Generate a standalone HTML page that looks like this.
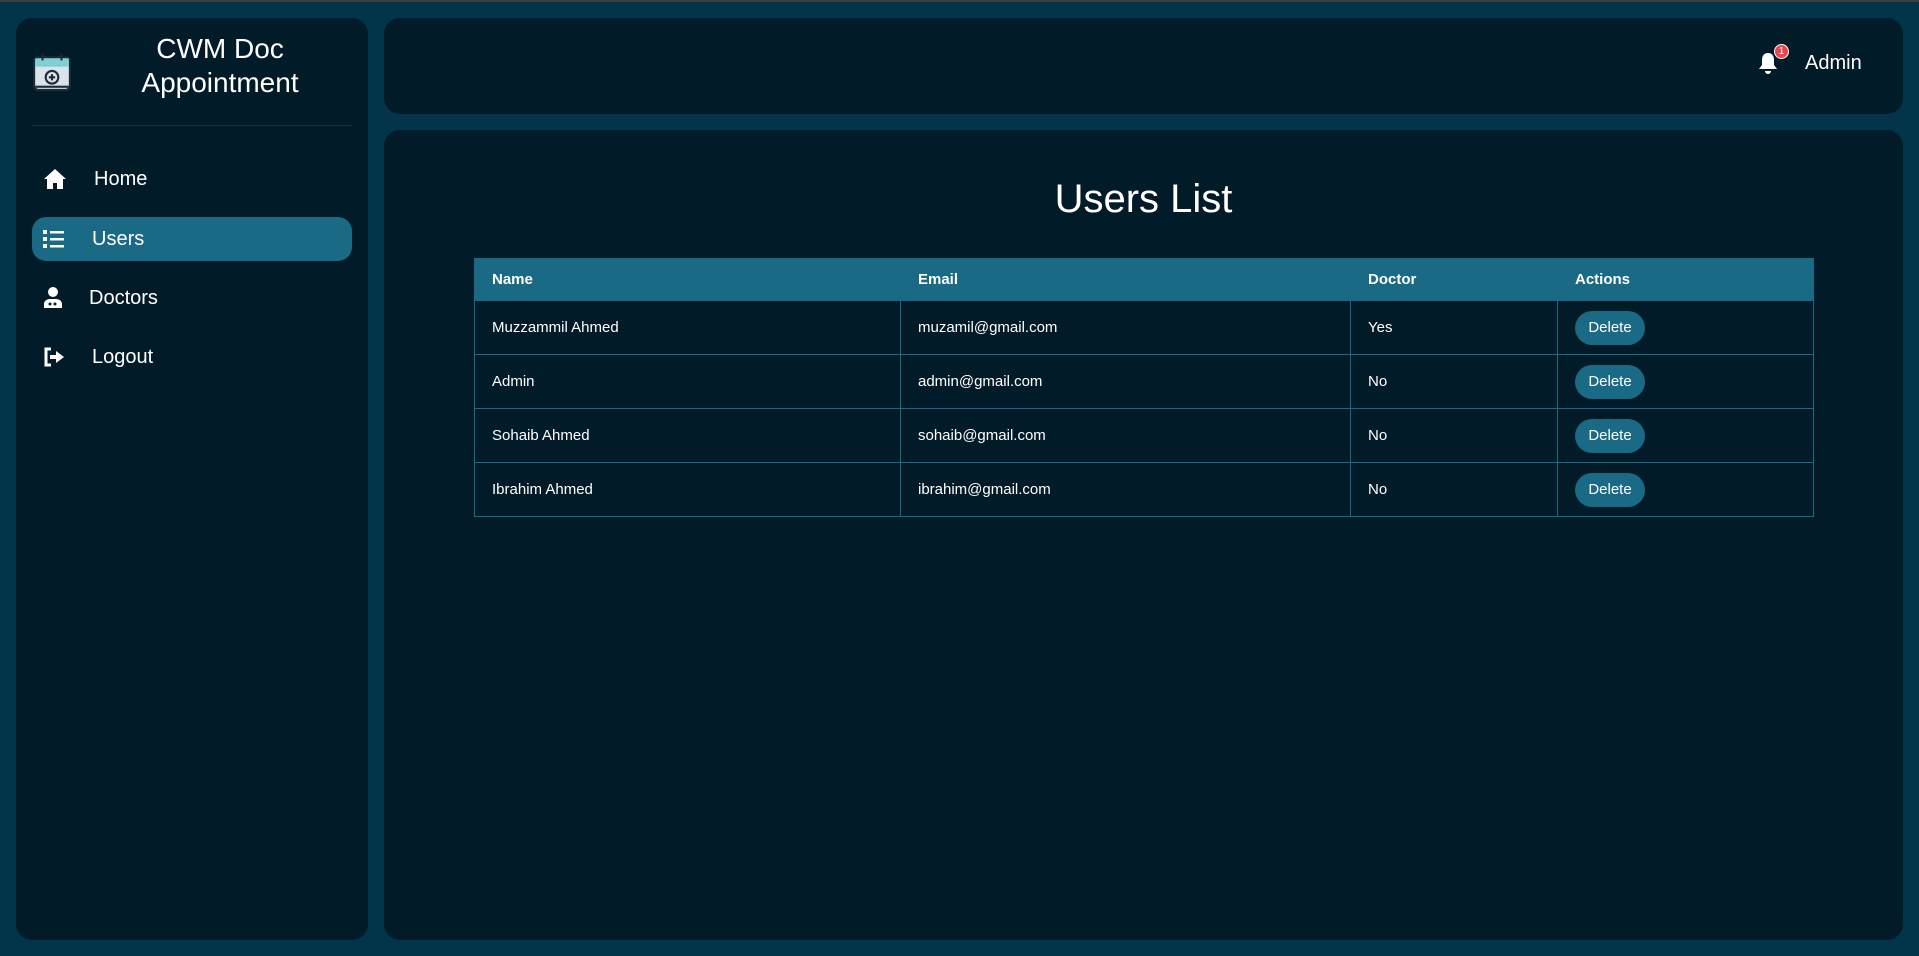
<!DOCTYPE html>
<html><head><meta charset="utf-8"><style>
*{box-sizing:border-box;margin:0;padding:0}
body{width:1919px;height:956px;background:#02354a;font-family:"Liberation Sans",sans-serif;color:#fff;position:relative;overflow:hidden}
.card{position:absolute;background:#021b28;border-radius:16px}
.abs{position:absolute}
.menu{position:absolute;left:32px;width:320px;height:44px;font-size:20px;line-height:44px}
.menu svg{position:absolute;left:11px;top:11px}
.menu span{position:absolute}
table{position:absolute;left:474px;top:258px;width:1340px;border-collapse:collapse;font-size:15px}
th{background:#1a6a85;text-align:left;font-weight:bold;height:42px;padding-left:17px;border:1px solid #1a6a85}
td{border:1px solid #1a6a85;height:54px;padding-left:17px}
.btn{display:inline-block;background:#1a6a85;border-radius:17px;width:70px;height:34px;line-height:34px;text-align:center;font-size:15px}
</style></head><body>
<div class="abs" style="left:0;top:0;width:1919px;height:2px;background:#3a3f44"></div>
<div class="card" style="left:16px;top:18px;width:352px;height:922px"></div>
<div class="card" style="left:384px;top:18px;width:1519px;height:96px"></div>
<div class="card" style="left:384px;top:130px;width:1519px;height:810px"></div>

<svg class="abs" style="left:32px;top:52px" width="40" height="40" viewBox="0 0 38 38">
<rect x="1" y="4" width="36" height="33" rx="4" fill="#1b2a38"/>
<rect x="3" y="6" width="32" height="29" rx="3" fill="#d9e3e8"/>
<rect x="3" y="6" width="32" height="8" fill="#7fd0d4"/>
<rect x="9" y="1" width="2" height="7" fill="#1b2a38"/><rect x="27" y="1" width="2" height="7" fill="#1b2a38"/>
<circle cx="19" cy="24" r="6" fill="none" stroke="#1b2a38" stroke-width="2"/>
<path d="M19 21v6M16 24h6" stroke="#1b2a38" stroke-width="2"/>
<rect x="3" y="32" width="32" height="2" fill="#1b2a38"/>
</svg>
<div class="abs" style="left:100px;top:32px;width:240px;text-align:center;font-size:28px;line-height:34px">CWM Doc<br>Appointment</div>
<div class="abs" style="left:32px;top:125px;width:320px;height:1px;background:#0d3040"></div>

<div class="menu" style="top:157px"><svg width="24" height="22" viewBox="0 0 24 22"><path d="M12 1L1 11h3v10h6v-6h4v6h6V11h3z" fill="#fff"/></svg><span style="left:62px">Home</span></div>
<div class="menu" style="top:217px;background:#1a6a85;border-radius:14px"><svg width="22" height="22" viewBox="0 0 22 22"><rect x="0" y="2" width="4" height="4" fill="#fff"/><rect x="0" y="9" width="4" height="4" fill="#fff"/><rect x="0" y="16" width="4" height="4" fill="#fff"/><rect x="7" y="3" width="14" height="2.5" fill="#fff"/><rect x="7" y="10" width="14" height="2.5" fill="#fff"/><rect x="7" y="17" width="14" height="2.5" fill="#fff"/></svg><span style="left:60px">Users</span></div>
<div class="menu" style="top:276px"><svg width="20" height="22" viewBox="0 0 20 22"><circle cx="10" cy="5" r="5" fill="#fff"/><path d="M1 21v-4c0-3 3-5 6-5h6c3 0 6 2 6 5v4z" fill="#fff"/><circle cx="7" cy="17" r="1.5" fill="#021b28"/><circle cx="12" cy="17" r="1.5" fill="#021b28"/></svg><span style="left:57px">Doctors</span></div>
<div class="menu" style="top:335px"><svg width="22" height="22" viewBox="0 0 22 22"><path d="M8 3H3v16h5" fill="none" stroke="#fff" stroke-width="3"/><path d="M7 9h6V5l8 6-8 6v-4H7z" fill="#fff"/></svg><span style="left:60px">Logout</span></div>

<svg class="abs" style="left:1758px;top:51px" width="20" height="24" viewBox="0 0 20 24"><path d="M10 2c-4 0-6 3-6 7v5l-3 4h18l-3-4V9c0-4-2-7-6-7z" fill="#fff"/><path d="M7 20a3 3 0 0 0 6 0z" fill="#fff"/></svg>
<div class="abs" style="left:1774px;top:44px;width:15px;height:15px;border-radius:50%;background:#e5484d;border:1px solid #fff;font-size:10px;line-height:13px;text-align:center">1</div>
<div class="abs" style="left:1805px;top:52px;font-size:20px">Admin</div>

<div class="abs" style="left:384px;top:177px;width:1519px;text-align:center;font-size:40px">Users List</div>

<table>
<tr><th style="width:426px">Name</th><th style="width:450px">Email</th><th style="width:207px">Doctor</th><th>Actions</th></tr>
<tr><td>Muzzammil Ahmed</td><td>muzamil@gmail.com</td><td>Yes</td><td><span class="btn">Delete</span></td></tr>
<tr><td>Admin</td><td>admin@gmail.com</td><td>No</td><td><span class="btn">Delete</span></td></tr>
<tr><td>Sohaib Ahmed</td><td>sohaib@gmail.com</td><td>No</td><td><span class="btn">Delete</span></td></tr>
<tr><td>Ibrahim Ahmed</td><td>ibrahim@gmail.com</td><td>No</td><td><span class="btn">Delete</span></td></tr>
</table>
</body></html>
